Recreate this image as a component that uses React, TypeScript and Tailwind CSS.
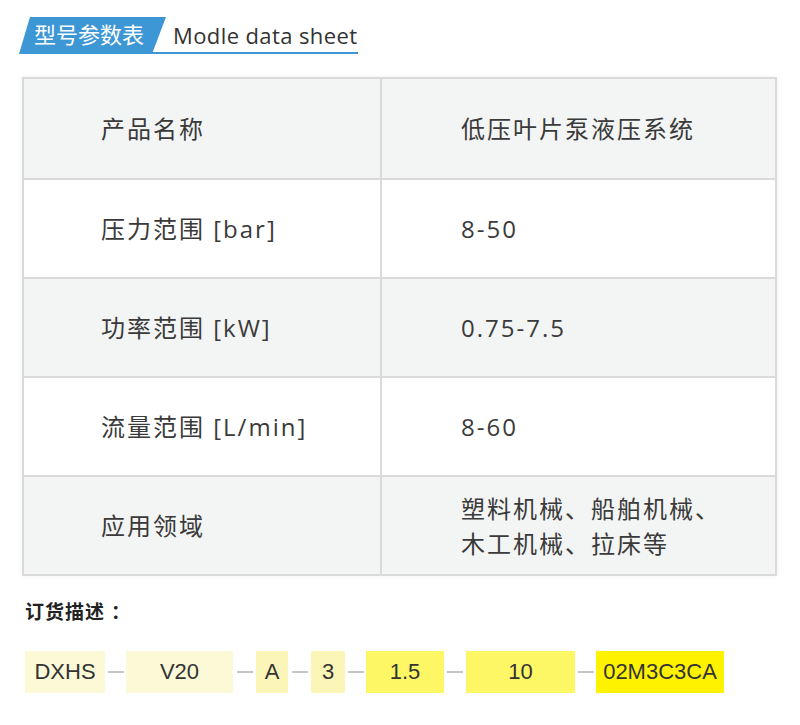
const rows = [
  { label: "产品名称", value: ["低压叶片泵液压系统"] },
  { label: "压力范围 [bar]", value: ["8-50"] },
  { label: "功率范围 [kW]", value: ["0.75-7.5"] },
  { label: "流量范围 [L/min]", value: ["8-60"] },
  { label: "应用领域", value: ["塑料机械、船舶机械、", "木工机械、拉床等"] },
];

const codes = [
  { text: "DXHS", w: "w-[80px]", bg: "bg-[#fcf9d6]", gap: "" },
  { text: "V20", w: "w-[107px]", bg: "bg-[#fcf9d6]", gap: "w-[21px]" },
  { text: "A", w: "w-[32px]", bg: "bg-[#fcf5b8]", gap: "w-[23px]" },
  { text: "3", w: "w-[34px]", bg: "bg-[#fcf5b8]", gap: "w-[23px]" },
  { text: "1.5", w: "w-[78px]", bg: "bg-[#fdf766]", gap: "w-[21px]" },
  { text: "10", w: "w-[109px]", bg: "bg-[#fdf766]", gap: "w-[22px]" },
  { text: "02M3C3CA", w: "w-[128px]", bg: "bg-[#fff200]", gap: "w-[21px]" },
];

const cjk = "font-['Open_Sans','Noto_Sans_CJK_SC',sans-serif]";

export default function App() {
  return (
    <div className={`w-[800px] h-[725px] bg-white text-[#3a3a3a] ${cjk}`}>
      {/* HEADER */}
      <div className="flex items-end pt-[17px] pl-[19px]">
        <div className="relative h-[37px] w-[147px]">
          <div className="absolute inset-0 bg-[#3d97d4] [clip-path:polygon(11px_0,147px_0,133px_100%,0_100%)]" />
          <span className="relative block pl-[15px] text-[22px] leading-[35px] text-white">型号参数表</span>
        </div>
        <div className="-ml-[14px] flex h-[37px] w-[206px] items-end border-b-2 border-[#3d97d4] pl-[21px]">
          <span className="text-[22px] leading-[34px] tracking-[0.4px] text-[#333]">Modle data sheet</span>
        </div>
      </div>

      {/* TABLE */}
      <div className="mt-[23px] ml-[22px] w-[755px] border-2 border-[#dadada] shadow-[0_0_6px_rgba(0,0,0,0.06)]">
        {rows.map((r, i) => (
          <div
            key={r.label}
            className={`flex h-[99px] ${i > 0 ? "border-t-2 border-[#dadada]" : ""} ${i % 2 === 0 ? "bg-[#f3f4f4]" : "bg-white"}`}
          >
            <div className="flex w-[358px] items-center border-r-2 border-[#dadada] pl-[77px] text-[24px] tracking-[2px]">
              {r.label}
            </div>
            <div className="flex flex-col justify-center pl-[79px] text-[24px] leading-[35px] tracking-[2px]">
              {r.value.map((v) => (
                <span key={v}>{v}</span>
              ))}
            </div>
          </div>
        ))}
      </div>

      {/* ORDER */}
      <div className="mt-[22px] ml-[25px] text-[19px] font-bold tracking-[1px] text-[#222]">
        订货描述<span className="ml-[6px]">：</span>
      </div>
      <div className="mt-[24px] ml-[25px] flex items-center font-['Liberation_Sans',sans-serif] text-[22px] text-[#333]">
        {codes.map((c, i) => (
          <div key={c.text} className="flex items-center">
            {i > 0 && (
              <div className={`flex justify-center ${c.gap}`}>
                <div className="h-[2px] w-[16px] bg-[#c4c4c4]" />
              </div>
            )}
            <div className={`flex h-[42px] items-center justify-center ${c.w} ${c.bg}`}>{c.text}</div>
          </div>
        ))}
      </div>
    </div>
  );
}
